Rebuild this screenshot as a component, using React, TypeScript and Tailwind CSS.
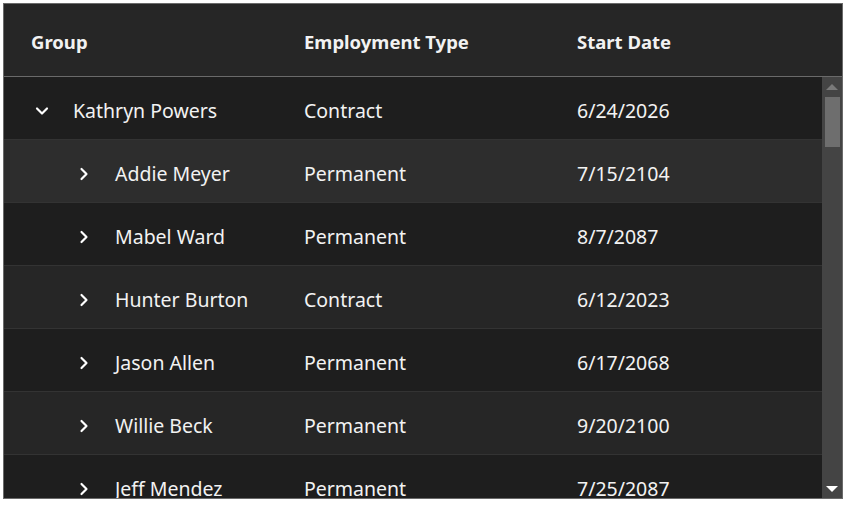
import { ChevronDown, ChevronRight } from "lucide-react";

interface Row {
  name: string;
  type: string;
  date: string;
  child: boolean;
  bg: string;
}

const ROWS: Row[] = [
  { name: "Kathryn Powers", type: "Contract", date: "6/24/2026", child: false, bg: "bg-[#1e1e1e]" },
  { name: "Addie Meyer", type: "Permanent", date: "7/15/2104", child: true, bg: "bg-[#2d2d2d]" },
  { name: "Mabel Ward", type: "Permanent", date: "8/7/2087", child: true, bg: "bg-[#1e1e1e]" },
  { name: "Hunter Burton", type: "Contract", date: "6/12/2023", child: true, bg: "bg-[#262626]" },
  { name: "Jason Allen", type: "Permanent", date: "6/17/2068", child: true, bg: "bg-[#1e1e1e]" },
  { name: "Willie Beck", type: "Permanent", date: "9/20/2100", child: true, bg: "bg-[#262626]" },
  { name: "Jeff Mendez", type: "Permanent", date: "7/25/2087", child: true, bg: "bg-[#1e1e1e]" },
];

export default function App() {
  return (
    <div className="w-[846px] h-[505px] bg-white p-[3px]" style={{ fontFamily: '"Noto Sans", "Open Sans", sans-serif' }}>
      <div className="w-[840px] h-[496px] border border-[#6a6a6a] bg-[#1e1e1e] flex flex-col overflow-hidden text-[#f2f2f2]">
        <div className="h-[73px] shrink-0 bg-[#262626] border-b border-[#6a6a6a] flex items-center pt-[4px] text-[18.5px] font-bold">
          <div className="w-[300px] pl-[27px]">Group</div>
          <div className="w-[273px]">Employment Type</div>
          <div>Start Date</div>
        </div>
        <div className="flex flex-1 min-h-0">
          <div className="flex-1 flex flex-col overflow-hidden">
            {ROWS.map((r) => (
              <div
                key={r.name}
                className={`h-[63px] shrink-0 flex items-center pt-[5px] border-b border-[#333333] text-[19.5px] ${r.bg}`}
              >
                <div className={`w-[300px] flex items-center ${r.child ? "pl-[70px]" : "pl-[28px]"}`}>
                  {r.child ? (
                    <ChevronRight size={20} strokeWidth={2.6} className="text-white" />
                  ) : (
                    <ChevronDown size={20} strokeWidth={2.6} className="text-white" />
                  )}
                  <span className={r.child ? "ml-[21px]" : "ml-[21px]"}>{r.name}</span>
                </div>
                <div className="w-[273px]">{r.type}</div>
                <div>{r.date}</div>
              </div>
            ))}
          </div>
          <div className="w-[20px] shrink-0 bg-[#444444] flex flex-col items-center pt-[7px] pb-[6px]">
            <div className="w-0 h-0 border-l-[6px] border-r-[6px] border-b-[6px] border-l-transparent border-r-transparent border-b-[#7a7a7a]" />
            <div className="mt-[7px] w-[15px] h-[50px] bg-[#6e6e6e]" />
            <div className="flex-1" />
            <div className="w-0 h-0 border-l-[6px] border-r-[6px] border-t-[6px] border-l-transparent border-r-transparent border-t-white" />
          </div>
        </div>
      </div>
    </div>
  );
}
